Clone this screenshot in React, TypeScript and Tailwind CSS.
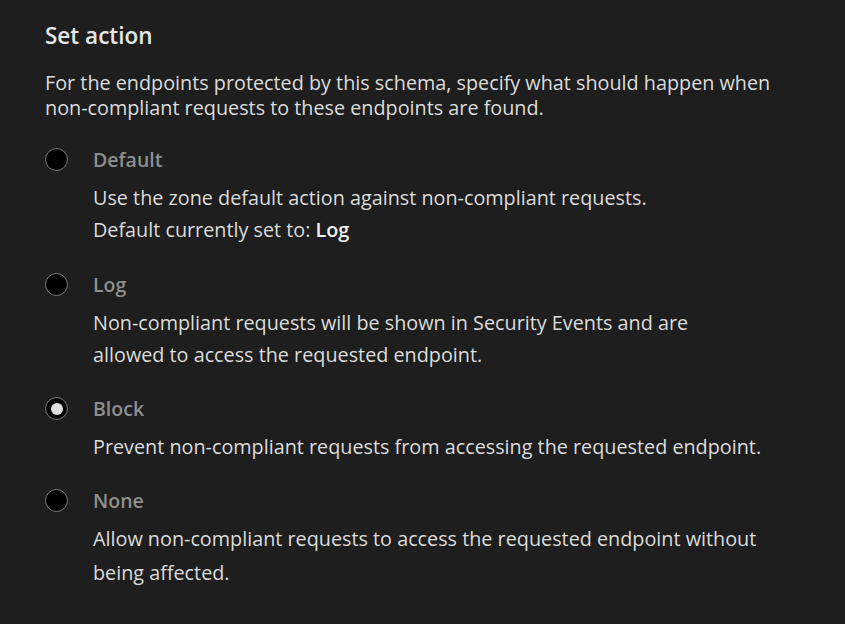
import React from "react";

const options = [
  { label: "Default", selected: false, desc: [<>Use the zone default action against non-compliant requests.</>, <>Default currently set to: <span className="font-semibold text-[#f0f0f0]">Log</span></>] },
  { label: "Log", selected: false, desc: [<>Non-compliant requests will be shown in Security Events and are</>, <>allowed to access the requested endpoint.</>] },
  { label: "Block", selected: true, desc: [<>Prevent non-compliant requests from accessing the requested endpoint.</>] },
  { label: "None", selected: false, desc: [<>Allow non-compliant requests to access the requested endpoint without</>, <>being affected.</>] },
];

export default function App() {
  return (
    <div className="w-[845px] h-[624px] bg-[#1e1e1e] text-[#dcdcdc] px-[45px] pt-[20px]" style={{ fontFamily: '"Open Sans", "Noto Sans", sans-serif' }}>
      <h2 className="text-[22.5px] font-semibold text-[#e6e6e6] leading-[32px]">Set action</h2>
      <p className="mt-[18px] text-[19.8px] leading-[25px]">
        For the endpoints protected by this schema, specify what should happen when<br />non-compliant requests to these endpoints are found.
      </p>
      <div className="mt-[24px] flex flex-col gap-[22px]">
        {options.map((o) => (
          <div key={o.label} className={o.label === "Log" ? "flex mt-[1px]" : "flex"}>
            <div className="w-[48px] shrink-0 pt-[4px]">
              <div className="w-[23px] h-[23px] rounded-full bg-black border border-[#7a7a7a] flex items-center justify-center">
                {o.selected && <div className="w-[12px] h-[12px] rounded-full bg-[#e0e0e0]" />}
              </div>
            </div>
            <div>
              <div className="text-[19.5px] font-semibold text-[#8e8e8e] leading-[32px]">{o.label}</div>
              <div className="mt-[6px] text-[19.8px] leading-[32px]">
                {o.desc.map((d, i) => (
                  <div key={i} className={o.label === "None" && i === 1 ? "mt-[2px]" : ""}>{d}</div>
                ))}
              </div>
            </div>
          </div>
        ))}
      </div>
    </div>
  );
}
